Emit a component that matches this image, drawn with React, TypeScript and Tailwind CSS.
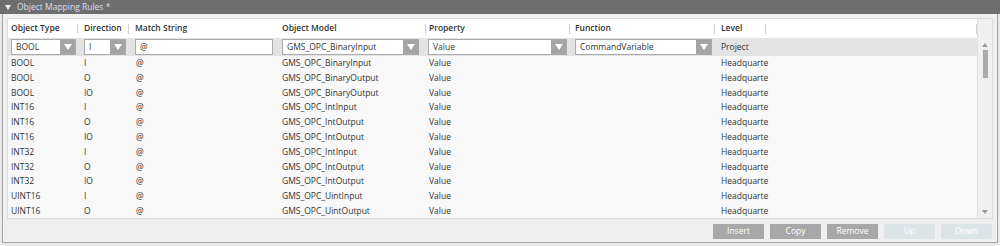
import React from 'react'

type Row = { type: string; dir: string; model: string }

const rows: Row[] = [
  { type: 'BOOL', dir: 'I', model: 'GMS_OPC_BinaryInput' },
  { type: 'BOOL', dir: 'O', model: 'GMS_OPC_BinaryOutput' },
  { type: 'BOOL', dir: 'IO', model: 'GMS_OPC_BinaryOutput' },
  { type: 'INT16', dir: 'I', model: 'GMS_OPC_IntInput' },
  { type: 'INT16', dir: 'O', model: 'GMS_OPC_IntOutput' },
  { type: 'INT16', dir: 'IO', model: 'GMS_OPC_IntOutput' },
  { type: 'INT32', dir: 'I', model: 'GMS_OPC_IntInput' },
  { type: 'INT32', dir: 'O', model: 'GMS_OPC_IntOutput' },
  { type: 'INT32', dir: 'IO', model: 'GMS_OPC_IntOutput' },
  { type: 'UINT16', dir: 'I', model: 'GMS_OPC_UintInput' },
  { type: 'UINT16', dir: 'O', model: 'GMS_OPC_UintOutput' },
]

const font = { fontFamily: '"Open Sans", "Noto Sans", sans-serif' }

function Combo({ value, width }: { value: string; width: string }) {
  return (
    <div className={`flex h-[16px] ${width} border border-[#a9a9a9] bg-white`}>
      <div className="flex-1 pl-[4px] leading-[14px] truncate">{value}</div>
      <div className="flex w-[15px] items-center justify-center bg-[#a4a4a4]">
        <svg width="8" height="6" viewBox="0 0 8 6">
          <path d="M0 0 H8 L4 6 Z" fill="#fff" />
        </svg>
      </div>
    </div>
  )
}

function Sep() {
  return <div className="h-[10px] w-px bg-[#cfcfcf]" />
}

function Btn({ label, on }: { label: string; on: boolean }) {
  return (
    <div
      className={`flex h-[15px] w-[51px] items-center justify-center text-[8.5px] text-white ${
        on ? 'bg-[#a8a8a8]' : 'bg-[#dde4e7]'
      }`}
    >
      {label}
    </div>
  )
}

export default function App() {
  return (
    <div className="h-[246px] w-[1000px] bg-[#e9e9e9] text-[#333]" style={font}>
      <div className="flex h-[14px] items-center gap-[6px] bg-[#6e6e6e] pl-[5px] text-[8.5px] text-[#dcdcf2]">
        <svg width="6" height="5" viewBox="0 0 6 5">
          <path d="M0 0 H6 L3 5 Z" fill="#f0f0f0" />
        </svg>
        <span>Object Mapping Rules *</span>
      </div>
      <div className="mx-[2px] h-[229px] border-x border-b border-[#a5a5a5] bg-[#efefef] px-[4px] pt-[4px]">
        <div className="flex h-[201px] overflow-hidden border border-[#dcdcdc] bg-[#f8f8f8]">
          <div className="flex flex-1 flex-col text-[8.5px]">
            <div className="flex h-[19px] shrink-0 items-center bg-white font-semibold">
              <div className="w-[69px] pl-[3px]">Object Type</div>
              <Sep />
              <div className="w-[50px] pl-[6px]">Direction</div>
              <Sep />
              <div className="w-[147px] pl-[6px]">Match String</div>
              <div className="w-[149px] pl-[6px]">Object Model</div>
              <Sep />
              <div className="w-[143px] pl-[3px]">Property</div>
              <Sep />
              <div className="w-[144px] pl-[5px]">Function</div>
              <Sep />
              <div className="w-[50px] pl-[6px]">Level</div>
              <Sep />
              <div className="flex-1" />
              <Sep />
            </div>
            <div className="flex h-[18px] shrink-0 items-center bg-[#e3e3e3]">
              <div className="w-[70px] pl-[3px]">
                <Combo value="BOOL" width="w-[65px]" />
              </div>
              <div className="w-[51px] pl-[6px]">
                <Combo value="I" width="w-[42px]" />
              </div>
              <div className="w-[147px] pl-[6px]">
                <div className="h-[16px] w-[138px] border border-[#a9a9a9] bg-white pl-[4px] leading-[14px]">@</div>
              </div>
              <div className="w-[150px] pl-[6px]">
                <Combo value="GMS_OPC_BinaryInput" width="w-[137px]" />
              </div>
              <div className="w-[144px] pl-[2px]">
                <Combo value="Value" width="w-[139px]" />
              </div>
              <div className="w-[145px] pl-[5px]">
                <Combo value="CommandVariable" width="w-[137px]" />
              </div>
              <div className="pl-[6px]">Project</div>
            </div>
            {rows.map((r, i) => (
              <div key={i} className="flex h-[14.8px] shrink-0 items-center">
                <div className="w-[70px] pl-[3px]">{r.type}</div>
                <div className="w-[51px] pl-[6px]">{r.dir}</div>
                <div className="w-[147px] pl-[7px]">@</div>
                <div className="w-[150px] pl-[6px]">{r.model}</div>
                <div className="w-[144px] pl-[3px]">Value</div>
                <div className="w-[145px]" />
                <div className="pl-[6px]">Headquarte</div>
              </div>
            ))}
          </div>
          <div className="flex w-[15px] flex-col items-center border-l border-[#e0e0e0] bg-[#f0f0f0] pt-[22px]">
            <svg width="6" height="4" viewBox="0 0 6 4" className="mt-[2px]">
              <path d="M0 4 H6 L3 0 Z" fill="#9a9a9a" />
            </svg>
            <div className="mt-[3px] h-[28px] w-[5px] bg-[#a9a9a9]" />
            <div className="flex-1" />
            <svg width="6" height="4" viewBox="0 0 6 4" className="mb-[4px]">
              <path d="M0 0 H6 L3 4 Z" fill="#9a9a9a" />
            </svg>
          </div>
        </div>
        <div className="mt-[5px] flex justify-end gap-[6px] pr-[1px]">
          <Btn label="Insert" on />
          <Btn label="Copy" on />
          <Btn label="Remove" on />
          <Btn label="Up" on={false} />
          <Btn label="Down" on={false} />
        </div>
      </div>
    </div>
  )
}
